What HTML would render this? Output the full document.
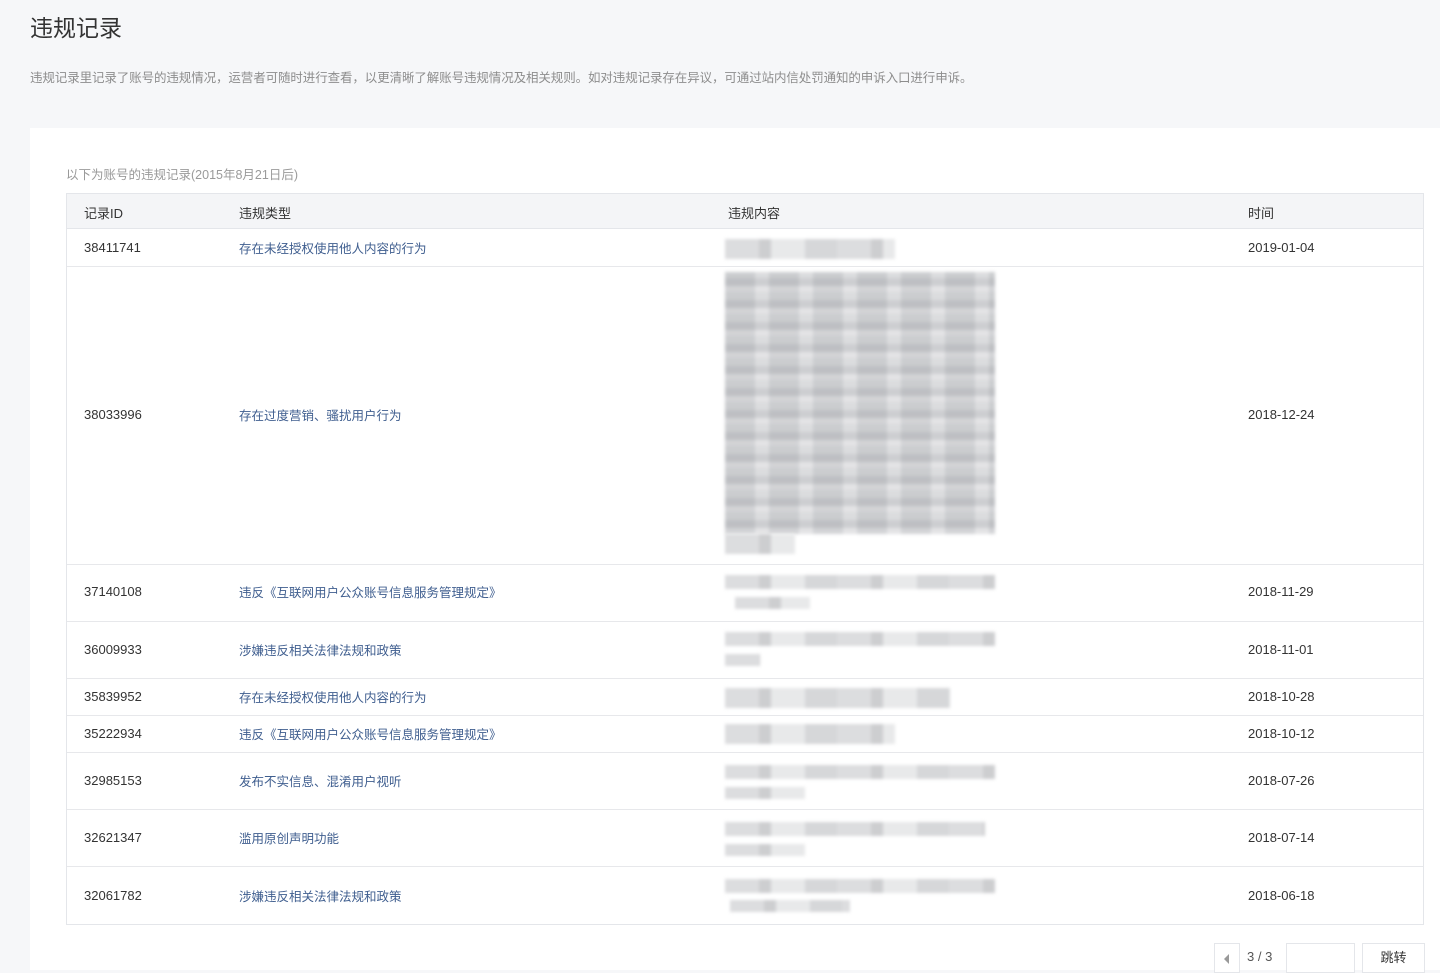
<!DOCTYPE html>
<html><head><meta charset="utf-8"><style>
*{margin:0;padding:0;box-sizing:border-box}
body{width:1440px;height:970px;overflow:hidden;background:#f6f7f9;font-family:"Liberation Sans","Noto Sans CJK SC",sans-serif;color:#333;position:relative}
.a{position:absolute}
h1{position:absolute;left:30px;top:9px;font-size:23px;font-weight:normal;color:#333}
.desc{left:30px;top:67px;font-size:12.5px;color:#8d8d8d;letter-spacing:-0.1px}
.card{left:30px;top:128px;width:1410px;height:842px;background:#fff}
.sub{left:66px;top:164px;font-size:12.5px;color:#9a9a9a}
.tbl{left:66px;top:193px;width:1358px;height:732px;border:1px solid #e4e6ea}
.hd{left:67px;top:194px;width:1356px;height:35px;background:#f4f5f7;border-bottom:1px solid #e4e6ea}
.line{left:67px;width:1356px;height:1px;background:#e7e8eb}
.t{font-size:13px;color:#333;white-space:nowrap}
.l{font-size:12.5px;color:#3f5e8f;white-space:nowrap;margin-top:-2px}
.g{background:repeating-linear-gradient(90deg,#dcdddf 0 34px,#cdced0 34px 46px,#e8e9ea 46px 80px,#d6d7d9 80px 112px);filter:blur(1.5px)}
.big{background:repeating-linear-gradient(0deg,#f2f2f3 0 6px,#dadbdd 6px 14px,#e9eaeb 14px 22px),repeating-linear-gradient(90deg,#dedfe1 0 30px,#f0f0f1 30px 44px);background-blend-mode:multiply;filter:blur(1.5px)}
.btn{border:1px solid #e4e6ea;background:#fff;height:30px;font-size:13px}
</style></head><body>
<h1>违规记录</h1>
<div class="a desc">违规记录里记录了账号的违规情况，运营者可随时进行查看，以更清晰了解账号违规情况及相关规则。如对违规记录存在异议，可通过站内信处罚通知的申诉入口进行申诉。</div>
<div class="a card"></div>
<div class="a sub">以下为账号的违规记录(2015年8月21日后)</div>
<div class="a tbl"></div>
<div class="a hd"></div>
<div class="a t" style="left:84px;top:203px">记录ID</div>
<div class="a t" style="left:239px;top:203px">违规类型</div>
<div class="a t" style="left:728px;top:203px">违规内容</div>
<div class="a t" style="left:1248px;top:203px">时间</div>

<div class="a line" style="top:266px"></div>
<div class="a line" style="top:564px"></div>
<div class="a line" style="top:621px"></div>
<div class="a line" style="top:678px"></div>
<div class="a line" style="top:715px"></div>
<div class="a line" style="top:752px"></div>
<div class="a line" style="top:809px"></div>
<div class="a line" style="top:866px"></div>

<div class="a t" style="left:84px;top:240px">38411741</div><div class="a l" style="left:239px;top:240px">存在未经授权使用他人内容的行为</div><div class="a t" style="left:1248px;top:240px">2019-01-04</div>
<div class="a t" style="left:84px;top:407px">38033996</div><div class="a l" style="left:239px;top:407px">存在过度营销、骚扰用户行为</div><div class="a t" style="left:1248px;top:407px">2018-12-24</div>
<div class="a t" style="left:84px;top:584px">37140108</div><div class="a l" style="left:239px;top:584px">违反《互联网用户公众账号信息服务管理规定》</div><div class="a t" style="left:1248px;top:584px">2018-11-29</div>
<div class="a t" style="left:84px;top:642px">36009933</div><div class="a l" style="left:239px;top:642px">涉嫌违反相关法律法规和政策</div><div class="a t" style="left:1248px;top:642px">2018-11-01</div>
<div class="a t" style="left:84px;top:689px">35839952</div><div class="a l" style="left:239px;top:689px">存在未经授权使用他人内容的行为</div><div class="a t" style="left:1248px;top:689px">2018-10-28</div>
<div class="a t" style="left:84px;top:726px">35222934</div><div class="a l" style="left:239px;top:726px">违反《互联网用户公众账号信息服务管理规定》</div><div class="a t" style="left:1248px;top:726px">2018-10-12</div>
<div class="a t" style="left:84px;top:773px">32985153</div><div class="a l" style="left:239px;top:773px">发布不实信息、混淆用户视听</div><div class="a t" style="left:1248px;top:773px">2018-07-26</div>
<div class="a t" style="left:84px;top:830px">32621347</div><div class="a l" style="left:239px;top:830px">滥用原创声明功能</div><div class="a t" style="left:1248px;top:830px">2018-07-14</div>
<div class="a t" style="left:84px;top:888px">32061782</div><div class="a l" style="left:239px;top:888px">涉嫌违反相关法律法规和政策</div><div class="a t" style="left:1248px;top:888px">2018-06-18</div>

<div class="a g" style="left:725px;top:239px;width:170px;height:20px"></div>
<div class="a big" style="left:725px;top:272px;width:270px;height:262px"></div>
<div class="a g" style="left:725px;top:534px;width:70px;height:20px"></div>
<div class="a g" style="left:725px;top:575px;width:270px;height:14px"></div>
<div class="a g" style="left:735px;top:597px;width:75px;height:12px"></div>
<div class="a g" style="left:725px;top:632px;width:270px;height:14px"></div>
<div class="a g" style="left:725px;top:654px;width:35px;height:12px"></div>
<div class="a g" style="left:725px;top:688px;width:225px;height:20px"></div>
<div class="a g" style="left:725px;top:724px;width:170px;height:20px"></div>
<div class="a g" style="left:725px;top:765px;width:270px;height:14px"></div>
<div class="a g" style="left:725px;top:787px;width:80px;height:12px"></div>
<div class="a g" style="left:725px;top:822px;width:260px;height:14px"></div>
<div class="a g" style="left:725px;top:844px;width:80px;height:12px"></div>
<div class="a g" style="left:725px;top:879px;width:270px;height:14px"></div>
<div class="a g" style="left:730px;top:900px;width:120px;height:12px"></div>

<div class="a btn" style="left:1214px;top:943px;width:26px"><div style="position:absolute;left:9px;top:10px;width:0;height:0;border-top:5px solid transparent;border-bottom:5px solid transparent;border-right:5px solid #999"></div></div>
<div class="a t" style="left:1247px;top:949px;color:#555">3 / 3</div>
<div class="a btn" style="left:1286px;top:943px;width:69px"></div>
<div class="a btn" style="left:1362px;top:943px;width:63px;text-align:center;line-height:28px">跳转</div>
</body></html>
